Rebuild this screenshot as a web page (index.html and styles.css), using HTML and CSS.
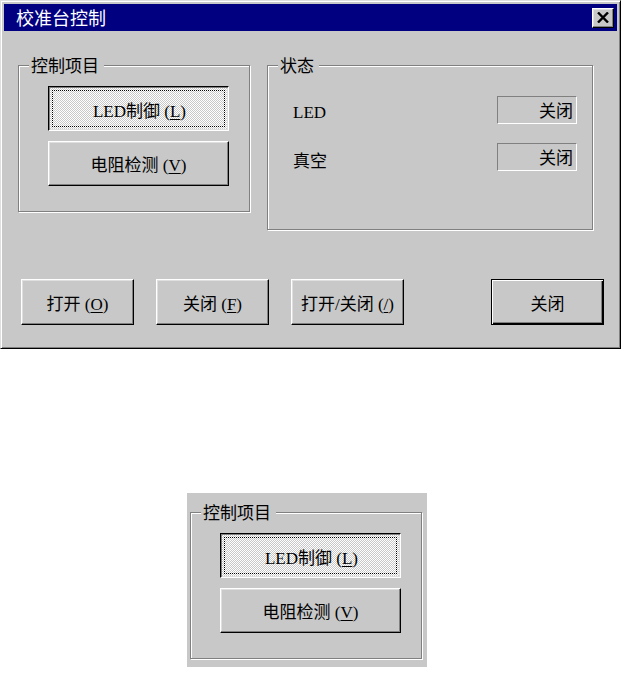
FILE: index.html
```html
<!DOCTYPE html>
<html lang="zh">
<head>
  <meta charset="UTF-8" />
  <title>校准台控制</title>
  <meta name="viewport" content="width=device-width, initial-scale=1.0" />
  <link rel="stylesheet" href="styles.css">
</head>
<body>

<div class="window">
  <div class="titlebar">
    <span class="title">校准台控制</span>
    <button class="close-btn" aria-label="关闭">
      <svg width="12" height="11" viewBox="0 0 12 11">
        <path d="M1 0.5 L11 10.5 M11 0.5 L1 10.5" stroke="#000" stroke-width="2.4" fill="none" />
      </svg>
    </button>
  </div>

  <div class="content">
    <div class="groups">
      <div class="group group-items">
        <span class="group-title">控制项目</span>
        <button class="btn btn-checked">LED制御 (<u>L</u>)</button>
        <button class="btn">电阻检测 (<u>V</u>)</button>
      </div>

      <div class="group group-status">
        <span class="group-title">状态</span>
        <div class="status-row">
          <span class="status-label">LED</span>
          <span class="status-box">关闭</span>
        </div>
        <div class="status-row">
          <span class="status-label">真空</span>
          <span class="status-box">关闭</span>
        </div>
      </div>
    </div>

    <div class="actions">
      <button class="btn btn-wide">打开 (<u>O</u>)</button>
      <button class="btn btn-wide">关闭 (<u>F</u>)</button>
      <button class="btn btn-wide">打开/关闭 (<u>/</u>)</button>
      <button class="btn btn-wide btn-default">关闭</button>
    </div>
  </div>
</div>

<!-- close-up of the left group -->
<div class="snippet">
  <div class="group group-items">
    <span class="group-title">控制项目</span>
    <button class="btn btn-checked">LED制御 (<u>L</u>)</button>
    <button class="btn">电阻检测 (<u>V</u>)</button>
  </div>
</div>

</body>
</html>
```

FILE: styles.css
```css
body {
  margin: 0;
  background: #fff;
  font-family: "Liberation Serif", "Noto Sans CJK SC", serif;
  font-size: 17px;
  color: #000;
}
.window {
  width: 621px;
  height: 349px;
  box-sizing: border-box;
  background: #c8c8c8;
  border: 1px solid;
  border-color: #dfdfdf #000 #000 #dfdfdf;
  box-shadow: inset 1px 1px #fff, inset -1px -1px #808080;
  padding: 3px;
}
.titlebar {
  height: 27px;
  background: #000080;
  color: #fff;
  display: flex;
  align-items: center;
  justify-content: space-between;
  padding: 0 3px 0 12px;
}
.title {
  font-family: "Noto Sans CJK SC", sans-serif;
  font-size: 18px;
  line-height: 27px;
}
.close-btn {
  width: 22px;
  height: 20px;
  padding: 0;
  background: #c8c8c8;
  border: 1px solid;
  border-color: #fff #000 #000 #fff;
  box-shadow: inset -1px -1px #808080, inset 1px 1px #dfdfdf;
  display: flex;
  align-items: center;
  justify-content: center;
}
.content {
  padding: 34px 0 0 14px;
}
.groups {
  display: flex;
  align-items: flex-start;
  gap: 17px;
}
.group {
  position: relative;
  box-sizing: border-box;
  border: 1px solid #808080;
  box-shadow: 1px 1px 0 #fff, inset 1px 1px 0 #fff;
}
.group-title {
  position: absolute;
  top: -11px;
  left: 10px;
  padding: 0 5px 0 2px;
  background: #c8c8c8;
  font-family: "Noto Sans CJK SC", sans-serif;
  line-height: 20px;
}
.group-items {
  width: 232px;
  height: 147px;
  padding: 20px 0 0 29px;
  display: flex;
  flex-direction: column;
  gap: 10px;
}
.group-status {
  width: 326px;
  height: 165px;
  padding: 30px 15px 0 25px;
  display: flex;
  flex-direction: column;
  gap: 17px;
}
.status-row {
  display: flex;
  justify-content: space-between;
  align-items: center;
}
.status-label {
  padding-top: 6px;
}
.status-box {
  width: 80px;
  height: 28px;
  box-sizing: border-box;
  border: 1px solid;
  border-color: #808080 #fff #fff #808080;
  text-align: right;
  padding-right: 3px;
  line-height: 26px;
  font-family: "Noto Sans CJK SC", sans-serif;
}
.btn {
  width: 181px;
  height: 45px;
  padding: 0;
  font: inherit;
  color: #000;
  background: #c8c8c8;
  border: 1px solid;
  border-color: #fff #000 #000 #fff;
  box-shadow: inset -1px -1px #808080, inset 1px 1px #dfdfdf;
}
.btn u {
  text-underline-offset: 2px;
}
.btn-checked {
  border-color: #000 #fff #fff #000;
  box-shadow: inset 1px 1px #808080, inset -1px -1px #dfdfdf;
  background: repeating-conic-gradient(#fff 0% 25%, #c8c8c8 0% 50%) 0 0 / 2px 2px;
  outline: 1px dotted #000;
  outline-offset: -5px;
  padding: 2px 0 0 2px;
}
.actions {
  display: flex;
  gap: 22px;
  margin: 49px 13px 0 3px;
}
.btn-wide {
  width: 113px;
  height: 46px;
}
.btn-default {
  margin-left: auto;
  border: 1px solid #000;
  box-shadow: inset 1px 1px #fff, inset -1px -1px #000, inset -2px -2px #808080;
}
.snippet {
  width: 240px;
  height: 174px;
  box-sizing: border-box;
  margin: 144px 0 0 187px;
  padding: 19px 0 0 3px;
  background: #c8c8c8;
}
```
